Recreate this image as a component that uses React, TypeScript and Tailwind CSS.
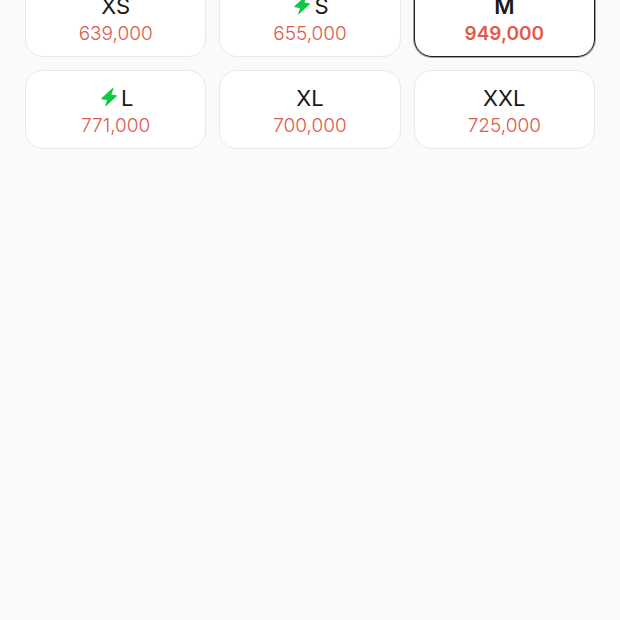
import React, { useState } from "react";

interface SizeOption {
  label: string;
  price: number;
  instant?: boolean;
}

const sizes: SizeOption[] = [
  { label: "XS", price: 639000 },
  { label: "S", price: 655000, instant: true },
  { label: "M", price: 949000 },
  { label: "L", price: 771000, instant: true },
  { label: "XL", price: 700000 },
  { label: "XXL", price: 725000 },
];

function BoltIcon() {
  return (
    <svg width="19" height="20" viewBox="-3 0 19 20" fill="#0fc844" aria-hidden="true">
      <path d="M11.4 .2 L.4 10.3 Q0 11.2 .8 11.3 L6 11.9 L4.2 17.7 Q4.3 18.6 5.1 18.1 L15.7 8.3 Q16.1 7.4 15.3 7.2 L10.4 6.6 L12.4 .8 Q12.3 -.4 11.4 .2Z" />
    </svg>
  );
}

export default function App() {
  const [selected, setSelected] = useState("M");

  return (
    <main className="min-h-screen overflow-hidden bg-[#fafafa] px-[25px] font-['Inter',sans-serif]">
      {/* Size grid, first row scrolled partly out of view */}
      <div className="-mt-[22px] grid grid-cols-3 gap-[13px]">
        {sizes.map((size) => {
          const active = size.label === selected;
          return (
            <button
              key={size.label}
              type="button"
              aria-pressed={active}
              onClick={() => setSelected(size.label)}
              className={`flex flex-col items-center rounded-[18px] border bg-white pt-[13px] pb-[9px] ${
                active ? "border-[#1c1c1c] ring-1 ring-[#1c1c1c]/40" : "border-[#e9e9e9]"
              }`}
            >
              <span
                className={`flex items-center gap-1 text-[22px] leading-[28px] text-[#191919] ${
                  active ? "font-semibold" : "font-normal"
                }`}
              >
                {size.instant && <BoltIcon />}
                {size.label}
              </span>
              <span
                className={`text-[19px] leading-[27px] ${
                  active ? "font-semibold text-[#e35a4c]" : "font-light text-[#dc5a4e]"
                }`}
              >
                {size.price.toLocaleString("en-US")}
              </span>
            </button>
          );
        })}
      </div>
    </main>
  );
}
